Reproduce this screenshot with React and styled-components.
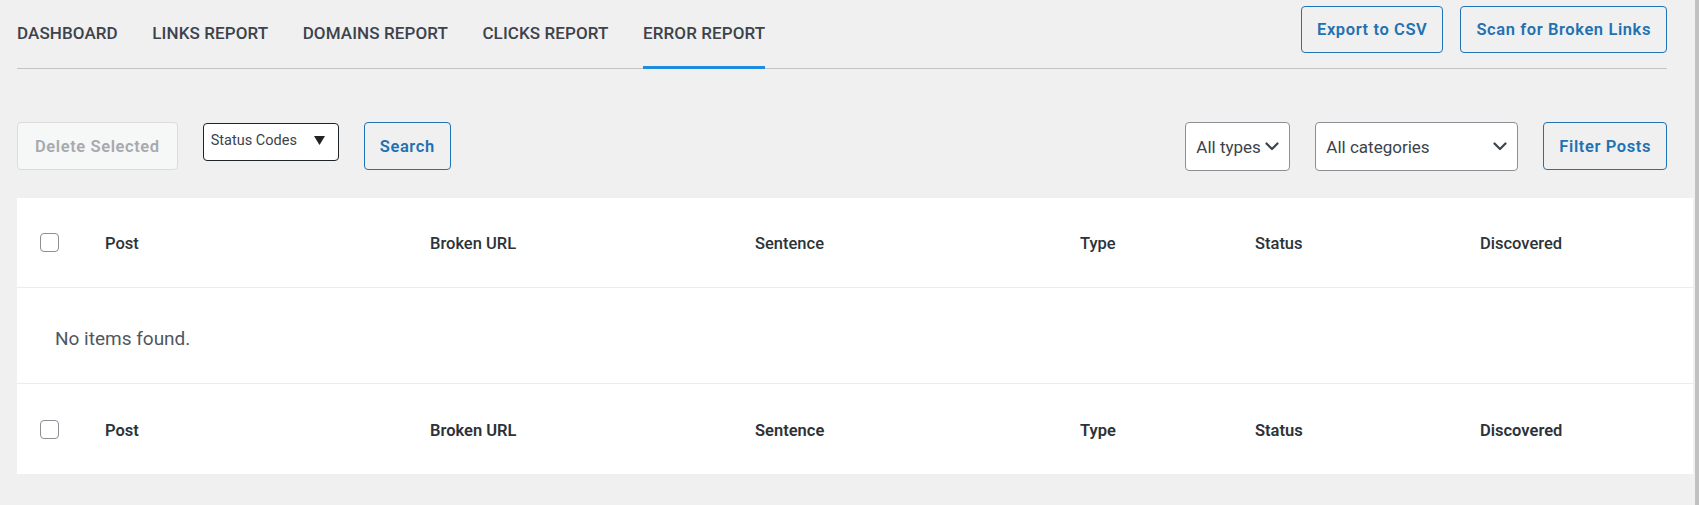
import React from "react";
import styled, { createGlobalStyle } from "styled-components";

const Global = createGlobalStyle`
  html, body { margin: 0; padding: 0; background: #f0f0f1; }
  body { font-family: Roboto, "Liberation Sans", Arial, sans-serif; color: #3c434a; }
  * { box-sizing: border-box; }
`;

const Page = styled.div`
  display: flex;
  width: 1699px;
  height: 505px;
  overflow: hidden;
  background: #f0f0f1;
`;

const Main = styled.div`
  flex: 1;
  padding-left: 17px;
  display: flex;
  flex-direction: column;
`;

const ScrollStrip = styled.div`
  width: 4px;
  margin-left: 2px;
  background: #c1c1c1;
`;

const Header = styled.div`
  display: flex;
  justify-content: space-between;
  align-items: flex-start;
  margin-right: 26px;
  border-bottom: 1px solid #c3c4c7;
  height: 69px;
`;

const Nav = styled.nav`
  display: flex;
  gap: 34.5px;
  height: 69px;
`;

const NavItem = styled.a`
  display: flex;
  align-items: center;
  height: 69px;
  font-size: 17px;
  font-weight: 500;
  letter-spacing: 0.1px;
  text-transform: uppercase;
  color: #3c434a;
  border-bottom: 3px solid ${(p) => (p.$active ? "#1e8cdc" : "transparent")};
  text-decoration: none;
`;

const Actions = styled.div`
  display: flex;
  gap: 17px;
  padding-top: 6px;
`;

const OutlineButton = styled.button`
  height: ${(p) => p.$h || 47}px;
  padding: 0 ${(p) => p.$px || 15}px;
  border: 1px solid #2271b1;
  border-radius: 4px;
  background: #f0f0f1;
  color: #2271b1;
  font-family: Roboto, "Liberation Sans", Arial, sans-serif;
  font-size: 16.5px;
  font-weight: 600;
  letter-spacing: 0.6px;
  cursor: pointer;
  white-space: nowrap;
`;

const DisabledButton = styled(OutlineButton)`
  border-color: #dcdcde;
  background: #f6f7f7;
  color: #a7aaad;
  cursor: default;
`;

const FilterRow = styled.div`
  display: flex;
  align-items: flex-start;
  justify-content: space-between;
  margin: 53px 26px 0 0;
  height: 49px;
`;

const Group = styled.div`
  display: flex;
  align-items: flex-start;
  gap: ${(p) => p.$gap || 24}px;
`;

const SmallSelect = styled.div`
  margin-top: 1px;
  height: 38px;
  width: 136px;
  display: flex;
  align-items: center;
  justify-content: space-between;
  padding: 0 13px 3px 7px;
  border: 1px solid #1d2327;
  border-radius: 4px;
  background: #fff;
  font-size: 14.5px;
  color: #3c434a;
`;

const Select = styled.div`
  height: 49px;
  width: ${(p) => p.$w}px;
  display: flex;
  align-items: center;
  justify-content: space-between;
  padding: 0 10px;
  border: 1px solid #8c8f94;
  border-radius: 4px;
  background: #fff;
  font-size: 17px;
  color: #3c434a;
`;

const Table = styled.div`
  margin-top: 27px;
  background: #fff;
  display: flex;
  flex-direction: column;
`;

const Row = styled.div`
  display: grid;
  grid-template-columns: 88px 325px 325px 325px 175px 225px 1fr;
  align-items: center;
  height: ${(p) => p.$h}px;
  border-bottom: ${(p) => (p.$last ? "none" : "1px solid #ececec")};
`;

const CheckCell = styled.div`
  padding-left: 23px;
  display: flex;
  align-items: center;
`;

const Checkbox = styled.span`
  display: block;
  width: 19px;
  height: 19px;
  border: 1px solid #8c8f94;
  border-radius: 4px;
  background: #fff;
`;

const HeadCell = styled.div`
  font-size: 16.5px;
  font-weight: ${(p) => (p.$bold ? 600 : 500)};
  color: #2c3338;
  padding-top: 2px;
`;

const EmptyRow = styled.div`
  height: 96px;
  display: flex;
  align-items: center;
  padding-left: 38px;
  padding-top: 6px;
  font-size: 19px;
  color: #50575e;
  border-bottom: 1px solid #ececec;
`;

const Chevron = () => (
  <svg width="14" height="9" viewBox="0 0 14 9">
    <polyline points="1.5,1.5 7,7 12.5,1.5" fill="none" stroke="#3c434a" strokeWidth="2.2" strokeLinecap="round" strokeLinejoin="round" />
  </svg>
);

const Triangle = () => (
  <svg width="11" height="9" viewBox="0 0 11 9">
    <polygon points="0,0 11,0 5.5,9" fill="#1d2327" />
  </svg>
);

const columns = ["Post", "Broken URL", "Sentence", "Type", "Status", "Discovered"];

const HeaderRow = ({ h, bold, last }) => (
  <Row $h={h} $last={last}>
    <CheckCell>
      <Checkbox />
    </CheckCell>
    {columns.map((c) => (
      <HeadCell key={c} $bold={bold}>{c}</HeadCell>
    ))}
  </Row>
);

export default function App() {
  return (
    <>
      <Global />
      <Page>
        <Main>
          <Header>
            <Nav>
              <NavItem>Dashboard</NavItem>
              <NavItem>Links Report</NavItem>
              <NavItem>Domains Report</NavItem>
              <NavItem>Clicks Report</NavItem>
              <NavItem $active>Error Report</NavItem>
            </Nav>
            <Actions>
              <OutlineButton $px={15}>Export to CSV</OutlineButton>
              <OutlineButton $px={15}>Scan for Broken Links</OutlineButton>
            </Actions>
          </Header>
          <FilterRow>
            <Group $gap={25}>
              <DisabledButton $h={48} $px={17}>Delete Selected</DisabledButton>
              <SmallSelect>
                <span>Status Codes</span>
                <Triangle />
              </SmallSelect>
              <OutlineButton $h={48}>Search</OutlineButton>
            </Group>
            <Group $gap={25}>
              <Select $w={105}>
                <span>All types</span>
                <Chevron />
              </Select>
              <Select $w={203}>
                <span>All categories</span>
                <Chevron />
              </Select>
              <OutlineButton $h={48}>Filter Posts</OutlineButton>
            </Group>
          </FilterRow>
          <Table>
            <HeaderRow h={90} />
            <EmptyRow>No items found.</EmptyRow>
            <HeaderRow h={90} bold last />
          </Table>
        </Main>
        <ScrollStrip />
      </Page>
    </>
  );
}
